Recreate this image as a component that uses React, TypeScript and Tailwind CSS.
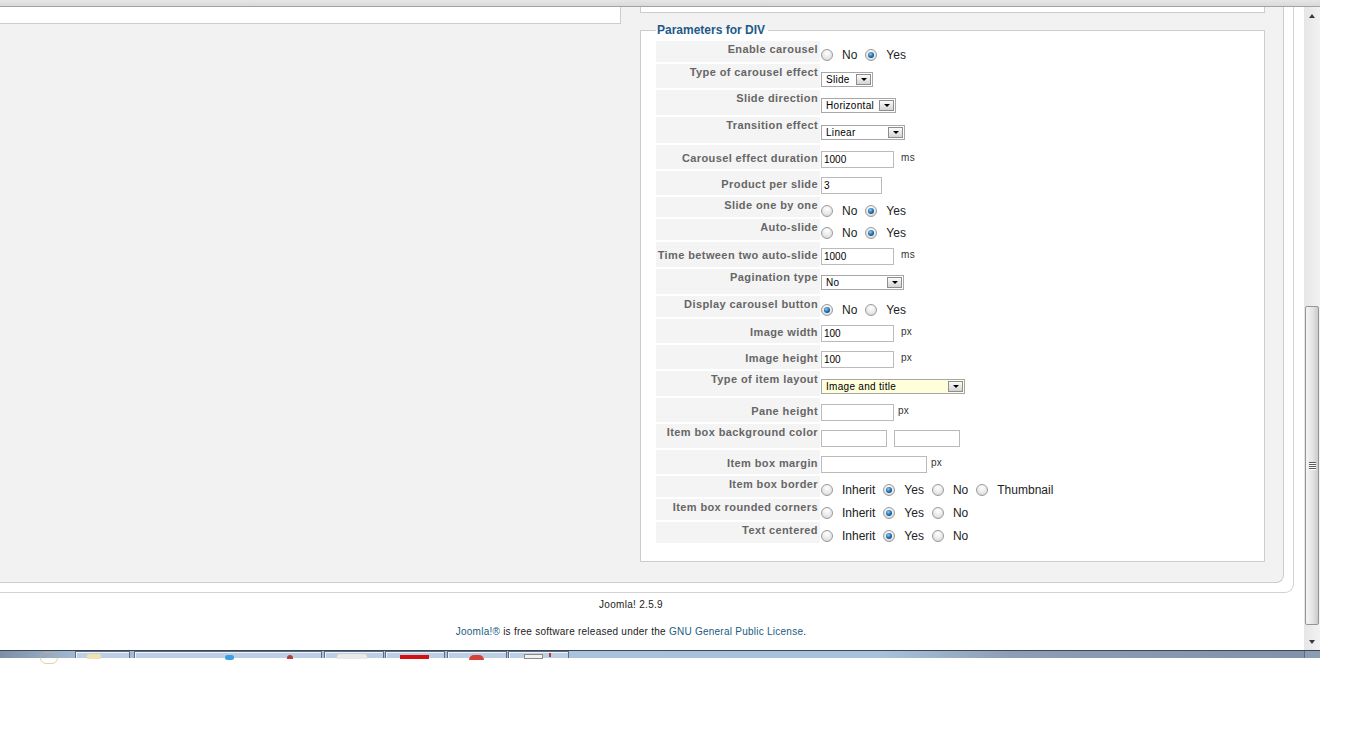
import clsx from "clsx"

type Opt = { text: string; on?: boolean }
type Box = { w: string; v?: string }

type Param =
  | { kind: "radio"; label: string; h: string; opts: Opt[] }
  | { kind: "select"; label: string; h: string; w: string; value: string; pale?: boolean; high?: boolean }
  | { kind: "text"; label: string; h: string; boxes: Box[]; unit?: string; near?: boolean; labelTop?: boolean }

const noYes = (yes: boolean): Opt[] => [
  { text: "No", on: !yes },
  { text: "Yes", on: yes },
]

const inheritYesNo: Opt[] = [{ text: "Inherit" }, { text: "Yes", on: true }, { text: "No" }]

const params: Param[] = [
  { kind: "radio", label: "Enable carousel", h: "h-[23px]", opts: noYes(true) },
  { kind: "select", label: "Type of carousel effect", h: "h-[26px]", w: "w-[52px]", value: "Slide" },
  { kind: "select", label: "Slide direction", h: "h-[27px]", w: "w-[75px]", value: "Horizontal" },
  { kind: "select", label: "Transition effect", h: "h-[28px]", w: "w-[84px]", value: "Linear" },
  { kind: "text", label: "Carousel effect duration", h: "h-[26px]", boxes: [{ w: "w-[73px]", v: "1000" }], unit: "ms" },
  { kind: "text", label: "Product per slide", h: "h-[26px]", boxes: [{ w: "w-[61px]", v: "3" }] },
  { kind: "radio", label: "Slide one by one", h: "h-[22px]", opts: noYes(true) },
  { kind: "radio", label: "Auto-slide", h: "h-[23px]", opts: noYes(true) },
  { kind: "text", label: "Time between two auto-slide", h: "h-[27px]", boxes: [{ w: "w-[73px]", v: "1000" }], unit: "ms" },
  { kind: "select", label: "Pagination type", h: "h-[27px]", w: "w-[83px]", value: "No", high: true },
  { kind: "radio", label: "Display carousel button", h: "h-[23px]", opts: noYes(false) },
  { kind: "text", label: "Image width", h: "h-[26px]", boxes: [{ w: "w-[73px]", v: "100" }], unit: "px" },
  { kind: "text", label: "Image height", h: "h-[26px]", boxes: [{ w: "w-[73px]", v: "100" }], unit: "px" },
  { kind: "select", label: "Type of item layout", h: "h-[27px]", w: "w-[144px]", value: "Image and title", pale: true },
  { kind: "text", label: "Pane height", h: "h-[26px]", boxes: [{ w: "w-[73px]" }], unit: "px", near: true },
  { kind: "text", label: "Item box background color", h: "h-[26px]", boxes: [{ w: "w-[66px]" }, { w: "w-[66px]" }], labelTop: true },
  { kind: "text", label: "Item box margin", h: "h-[26px]", boxes: [{ w: "w-[106px]" }], unit: "px", near: true },
  { kind: "radio", label: "Item box border", h: "h-[23px]", opts: [...inheritYesNo, { text: "Thumbnail" }] },
  { kind: "radio", label: "Item box rounded corners", h: "h-[23px]", opts: inheritYesNo },
  { kind: "radio", label: "Text centered", h: "h-[23px]", opts: inheritYesNo },
]

function Radio({ on }: { on?: boolean }) {
  return (
    <span className="flex h-[12px] w-[12px] shrink-0 items-center justify-center rounded-full border border-[#9a9a9a] bg-[radial-gradient(circle_at_50%_30%,#ffffff,#e4e4e4_65%,#cdcdcd)]">
      {on && (
        <span className="h-[6px] w-[6px] rounded-full bg-[radial-gradient(circle_at_40%_35%,#8fcdf5,#1f6fae_50%,#0a3460)]" />
      )}
    </span>
  )
}

function Select({ w, value, pale }: { w: string; value: string; pale?: boolean }) {
  return (
    <div className={clsx("flex h-[15px] items-center border border-[#a7a7a7]", w, pale ? "bg-[#ffffdc]" : "bg-white")}>
      <span className="flex-1 pl-[4px] text-[10px] leading-[13px] tracking-[0.3px] text-black">{value}</span>
      <span className="mr-[1px] flex h-[11px] w-[15px] items-center justify-center border border-[#8e8e8e] bg-gradient-to-b from-[#fbfbfb] to-[#d4d4d4]">
        <span className="block h-0 w-0 border-x-[3px] border-t-[3px] border-x-transparent border-t-black" />
      </span>
    </div>
  )
}

function ParamRow({ p }: { p: Param }) {
  const labelPad = p.kind === "text" && !p.labelTop ? "pt-[7px]" : "pt-[2px]"
  return (
    <div className={clsx("flex", p.h)}>
      <div
        className={clsx(
          "w-[164px] shrink-0 border-b-2 border-white bg-[#f4f4f4] pr-[2px] text-right text-[11px] font-bold leading-[12px] tracking-[0.4px] text-[#666666]",
          labelPad
        )}
      >
        {p.label}
      </div>

      {p.kind === "radio" && (
        <div className="flex h-[14px] items-start pl-[1px] pt-[7px] box-content">
          {p.opts.map((o, i) => (
            <div key={i} className="flex h-[14px] items-center">
              <Radio on={o.on} />
              <span className="ml-[9px] mr-[8px] text-[12px] leading-[14px] text-[#222222]">{o.text}</span>
            </div>
          ))}
        </div>
      )}

      {p.kind === "select" && (
        <div className={clsx("pl-[1px]", p.high ? "pt-[6px]" : "pt-[8px]")}>
          <Select w={p.w} value={p.value} pale={p.pale} />
        </div>
      )}

      {p.kind === "text" && (
        <div className="flex items-start gap-[7px] pl-[1px] pt-[6px]">
          {p.boxes.map((b, i) => (
            <span
              key={i}
              className={clsx("block h-[17px] border border-[#bababa] bg-white pl-[2px] text-[10px] leading-[15px] text-black", b.w)}
            >
              {b.v}
            </span>
          ))}
          {p.unit && (
            <span className={clsx("text-[10px] leading-[14px] tracking-[0.3px] text-[#333333]", p.near && "-ml-[3px]")}>
              {p.unit}
            </span>
          )}
        </div>
      )}
    </div>
  )
}

function Arrow({ up }: { up?: boolean }) {
  return (
    <div className="flex h-[17px] items-center justify-center">
      <span
        className={clsx(
          "block h-0 w-0 border-x-[3px] border-x-transparent",
          up ? "border-b-[4px] border-b-[#3a3a3a]" : "border-t-[4px] border-t-[#3a3a3a]"
        )}
      />
    </div>
  )
}

function Scrollbar() {
  return (
    <div className="flex w-[16px] flex-col bg-gradient-to-r from-[#e6e6e6] to-[#f2f2f2]">
      <Arrow up />
      <div className="flex-1 px-[1px] pt-[282px]">
        <div className="flex h-[319px] flex-col items-center justify-center rounded-[2px] border border-[#959595] bg-[linear-gradient(90deg,#f4f4f4,#e4e4e4_55%,#cacaca)]">
          {[0, 1, 2, 3].map((i) => (
            <span key={i} className="mb-[1px] block h-[1px] w-[7px] bg-[#5a5a5a] shadow-[0_1px_0_#ffffff]" />
          ))}
        </div>
      </div>
      <Arrow />
    </div>
  )
}

const taskButtons = [
  { w: "w-[55px]", ml: "ml-[75px]" },
  { w: "w-[188px]", ml: "ml-[4px]" },
  { w: "w-[60px]", ml: "ml-[2px]" },
  { w: "w-[60px]", ml: "ml-[1px]" },
  { w: "w-[60px]", ml: "ml-[2px]" },
  { w: "w-[61px]", ml: "ml-[1px]" },
]

function Taskbar() {
  return (
    <div className="relative flex h-[8px] w-[1320px] border-t border-[#37475b] bg-[linear-gradient(90deg,#7d8fa6_0px,#a2b8d2_75px,#aac2dd_320px,#a9c1dc_880px,#8d9eb4_1010px,#8292a8_1300px)]">
      {/* start orb rim */}
      <span className="absolute left-[40px] top-[1px] h-[12px] w-[18px] rounded-full border border-[#c9b47a] opacity-60" />
      {taskButtons.map((b, i) => (
        <div
          key={i}
          className={clsx(
            "flex h-[7px] items-start border-x border-t border-[#5d6c80] bg-[#bdcfe4] shadow-[inset_1px_1px_0_#eef3f9]",
            b.w,
            b.ml
          )}
        >
          {i === 0 && <span className="ml-[11px] mt-[2px] h-[5px] w-[14px] rounded-t-[2px] bg-[#efe2b0]" />}
          {i === 1 && (
            <>
              <span className="ml-[90px] mt-[3px] h-[5px] w-[9px] rounded-full bg-[#3aa0e2]" />
              <span className="ml-[53px] mt-[3px] h-[4px] w-[6px] rounded-t-full bg-[#b0403a]" />
            </>
          )}
          {i === 2 && <span className="ml-[12px] mt-[2px] h-[5px] w-[30px] rounded-t-[3px] bg-[#e9e9e9]" />}
          {i === 3 && <span className="ml-[14px] mt-[3px] h-[4px] w-[29px] bg-[#d60f12]" />}
          {i === 4 && <span className="ml-[21px] mt-[3px] h-[5px] w-[15px] rounded-t-full bg-[#d8403a]" />}
          {i === 5 && (
            <>
              <span className="ml-[15px] mt-[2px] h-[5px] w-[19px] border border-[#8a8a8a] bg-[#f1f1f1]" />
              <span className="ml-[6px] mt-[1px] h-[4px] w-[2px] bg-[#c23a2c]" />
            </>
          )}
        </div>
      ))}
      <span className="ml-auto h-[7px] w-[16px] border-l border-[#5d6c80] bg-[#8d9db1]" />
    </div>
  )
}

export default function App() {
  return (
    <div className="h-[736px] w-[1366px] overflow-hidden bg-white font-['Liberation_Sans',Arial,sans-serif]">
      {/* toolbar edge */}
      <div className="h-[7px] w-[1320px] border-b border-[#a3a3a3] bg-gradient-to-b from-[#e6e6e6] to-[#d9d9d9]" />

      <div className="flex h-[643px] w-[1320px]">
        <div className="w-[1304px] overflow-hidden bg-white">
          <div className="w-[1294px] rounded-br-[9px] border-b border-r border-[#d2d2d2] pb-[9px] pr-[9px]">
            <div className="flex h-[576px] w-[1284px] rounded-br-[8px] border-b border-r border-[#cccccc] bg-[#f2f2f2]">
              <div className="w-[640px] shrink-0">
                <div className="h-[17px] w-[621px] border-b border-r border-[#cccccc] bg-white" />
              </div>

              <div className="w-[625px] shrink-0">
                <div className="h-[6px] border-x border-b border-[#cccccc] bg-white" />
                <fieldset className="mt-[10px] border border-[#cccccc] bg-white pb-[16px] pl-[15px] pt-[4px]">
                  <legend className="pl-[1px] pr-[3px] text-[12px] font-bold leading-[14px] text-[#1d5a8a]">
                    Parameters for DIV
                  </legend>
                  {params.map((p) => (
                    <ParamRow key={p.label} p={p} />
                  ))}
                </fieldset>
              </div>
            </div>
          </div>

          <div className="w-[1262px] pt-[6px] text-center text-[10px] leading-[12px] tracking-[0.3px] text-[#222222]">
            <p>Joomla! 2.5.9</p>
            <p className="mt-[15px] tracking-[0.25px]">
              <span className="text-[#1b5b80]">Joomla!®</span> is free software released under the{" "}
              <span className="text-[#1b5b80]">GNU General Public License</span>.
            </p>
          </div>
        </div>
        <Scrollbar />
      </div>

      <Taskbar />
    </div>
  )
}
